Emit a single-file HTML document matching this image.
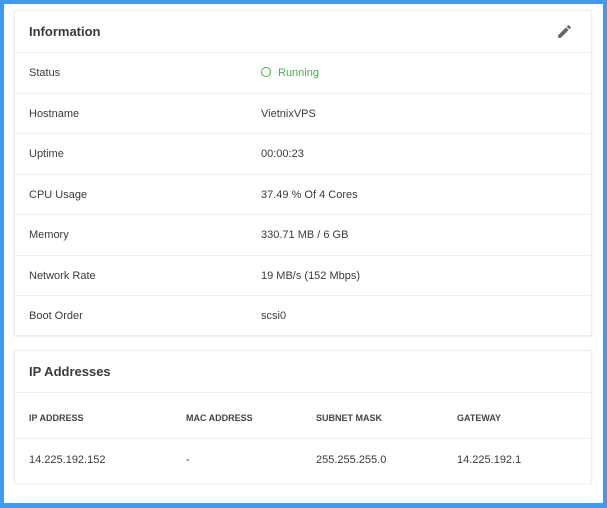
<!DOCTYPE html>
<html><head><style>
*{box-sizing:border-box;margin:0;padding:0}
html,body{width:607px;height:508px;overflow:hidden;background:#3d9bf3}
.frame{position:absolute;left:4px;top:4px;width:599px;height:499px;background:#fff;overflow:hidden}
.card{position:absolute;left:10px;width:578px;background:#fff;border:1px solid #ececec;box-shadow:0 1px 2px rgba(0,0,0,.08);font-family:"Liberation Sans",sans-serif;color:#3a3a3a;overflow:hidden}
.hd{height:42px;line-height:41px;padding-left:14px;font-size:13px;font-weight:bold;color:#3a3a3a;border-bottom:1px solid #eee;position:relative}
.row{height:40.5px;line-height:40px;font-size:11px;border-bottom:1px solid #eee;position:relative;padding-left:14px}
.row:last-child{border-bottom:none}
.row .v{position:absolute;left:246px;top:0}
.g{color:#3fb24a}
.circ{display:inline-block;width:10px;height:10px;border:1px solid #3fb24a;border-radius:50%;vertical-align:-1px;margin-right:7px}
.th,.td{position:relative;font-size:11px;padding-left:14px}
.th{height:46px;line-height:50px;font-size:9px;font-weight:bold;color:#444;border-bottom:1px solid #eee}
.td{height:42px;line-height:42px}
.c{position:absolute;top:0}
</style></head><body>
<div class="frame">
<div class="card" style="top:6px;height:326px">
 <div class="hd">Information
  <svg style="position:absolute;right:18px;top:12px" width="17" height="17" viewBox="0 0 24 24"><path fill="#666" d="M3 17.25V21h3.75L17.81 9.94l-3.75-3.75L3 17.25zM20.71 7.04a1 1 0 0 0 0-1.41l-2.34-2.34a1 1 0 0 0-1.41 0l-1.83 1.83 3.75 3.75 1.83-1.83z"/></svg>
 </div>
 <div class="row">Status<span class="v g"><span class="circ"></span>Running</span></div>
 <div class="row">Hostname<span class="v">VietnixVPS</span></div>
 <div class="row">Uptime<span class="v">00:00:23</span></div>
 <div class="row">CPU Usage<span class="v">37.49 % Of 4 Cores</span></div>
 <div class="row">Memory<span class="v">330.71 MB / 6 GB</span></div>
 <div class="row">Network Rate<span class="v">19 MB/s (152 Mbps)</span></div>
 <div class="row">Boot Order<span class="v">scsi0</span></div>
</div>
<div class="card" style="top:346px;height:133px;border-bottom:none">
 <div class="hd">IP Addresses</div>
 <div class="th">IP ADDRESS<span class="c" style="left:171px">MAC ADDRESS</span><span class="c" style="left:301px">SUBNET MASK</span><span class="c" style="left:442px">GATEWAY</span></div>
 <div class="td">14.225.192.152<span class="c" style="left:171px">-</span><span class="c" style="left:301px">255.255.255.0</span><span class="c" style="left:442px">14.225.192.1</span></div>
</div>
</div>
</body></html>
